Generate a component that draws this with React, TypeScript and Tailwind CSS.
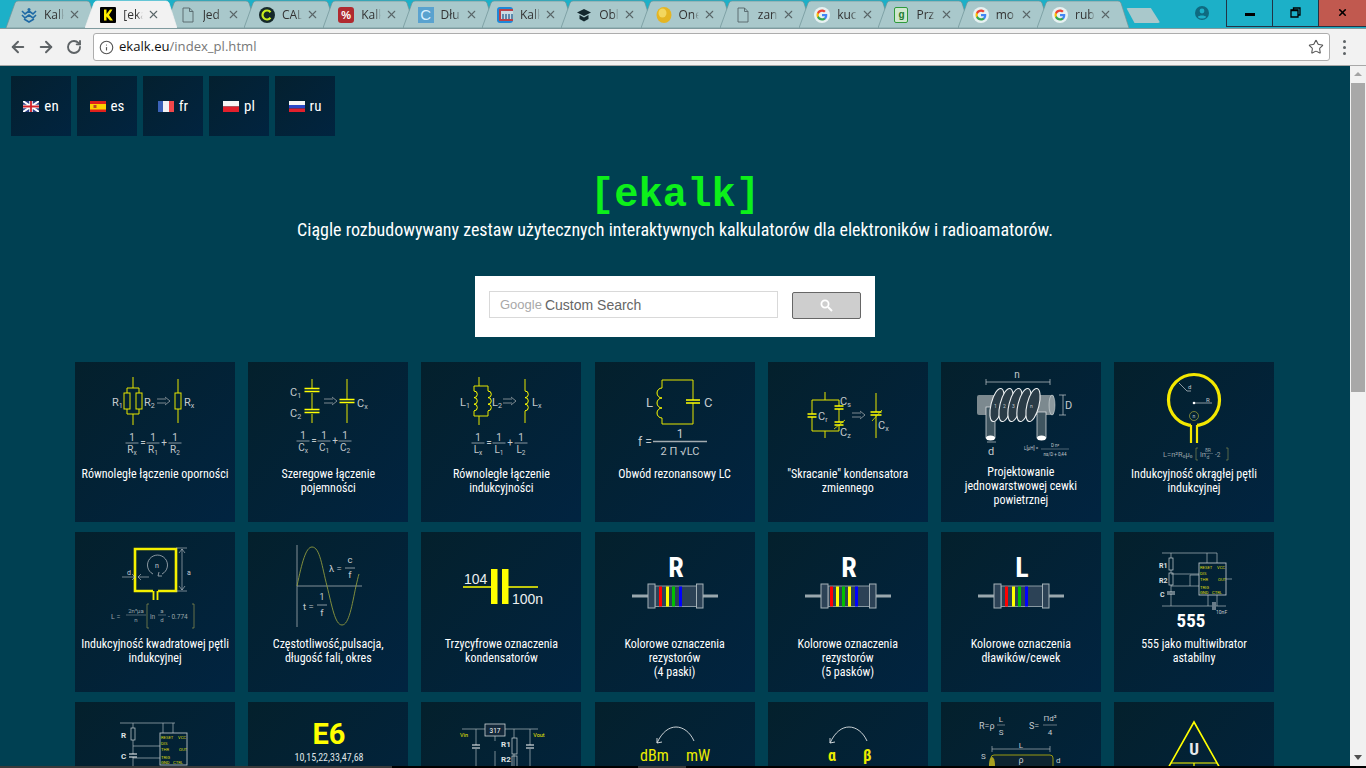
import type { ReactNode } from "react";
import { ArrowLeft, ArrowRight, Info, RotateCw, Star, X } from "lucide-react";

const YEL = "#e6e600";
const GRY = "#c4cace";
const COND = "Roboto Condensed, Liberation Sans Narrow, Roboto";

function T({ x, y, s = 10, c = GRY, a = "start", b = false, f = "Roboto", children }: { x: number; y: number; s?: number; c?: string; a?: "start" | "middle" | "end"; b?: boolean; f?: string; children: ReactNode }) {
  return (
    <text x={x} y={y} fontSize={s} fill={c} textAnchor={a} fontWeight={b ? 700 : 400} fontFamily={f}>
      {children}
    </text>
  );
}

// label with subscript
function Sub({ x, y, l, i, s = 11, c = GRY }: { x: number; y: number; l: string; i: string; s?: number; c?: string }) {
  return (
    <text x={x} y={y} fontSize={s} fill={c} fontFamily="Roboto">
      {l}
      <tspan fontSize={s * 0.65} dy={2}>{i}</tspan>
    </text>
  );
}

function Frac({ x, y, w, l, i }: { x: number; y: number; w: number; l: string; i: string }) {
  return (
    <g>
      <T x={x} y={y - 2} a="middle" s={10}>1</T>
      <line x1={x - w / 2} x2={x + w / 2} y1={y} y2={y} stroke={GRY} strokeWidth={0.7} />
      <text x={x} y={y + 10} fontSize={10} fill={GRY} textAnchor="middle" fontFamily="Roboto">
        {l}
        <tspan fontSize={6.5} dy={2}>{i}</tspan>
      </text>
    </g>
  );
}

function Formula({ l, y = 81, xs }: { l: string; y?: number; xs: number[] }) {
  return (
    <g>
      <Frac x={xs[0]} y={y} w={13} l={l} i="x" />
      <T x={xs[1]} y={y + 3} a="middle" s={10}>=</T>
      <Frac x={xs[2]} y={y} w={13} l={l} i="1" />
      <T x={xs[3]} y={y + 3} a="middle" s={10}>+</T>
      <Frac x={xs[4]} y={y} w={13} l={l} i="2" />
    </g>
  );
}

function Arrow({ x, y }: { x: number; y: number }) {
  return <path d={`M${x} ${y - 2}h9M${x} ${y + 2}h9M${x + 8} ${y - 4}l5 4-5 4`} stroke="#8b959b" fill="none" strokeWidth={0.9} />;
}

function Coil({ x, y, n, r = 3, dir = 1 }: { x: number; y: number; n: number; r?: number; dir?: number }) {
  let d = `M${x} ${y}`;
  for (let k = 0; k < n; k++) d += `a${r} ${r} 0 0 ${dir} 0 ${r * 2}`;
  return <path d={d} stroke="#ffff00" fill="none" strokeWidth={1} />;
}

function Cap({ x, y, w = 14, gap = 3, sw = 1.6 }: { x: number; y: number; w?: number; gap?: number; sw?: number }) {
  return <path d={`M${x - w / 2} ${y - gap / 2}h${w}M${x - w / 2} ${y + gap / 2}h${w}`} stroke="#ffff00" strokeWidth={sw} />;
}

function Svg({ children }: { children: ReactNode }) {
  return (
    <svg width={160} height={104} viewBox="0 0 160 104" className="block">
      {children}
    </svg>
  );
}

function ParallelR() {
  return (
    <Svg>
      <path d="M58 15v11M52 31v-5h12v5M52 47v5h12v-5M58 52v11M103 17v14M103 47v14" stroke={YEL} fill="none" strokeWidth={1} />
      <rect x={49} y={31} width={6} height={16} stroke={YEL} fill="none" />
      <rect x={61} y={31} width={6} height={16} stroke={YEL} fill="none" />
      <rect x={100} y={31} width={6} height={16} stroke={YEL} fill="none" />
      <Sub x={37} y={44} l="R" i="1" />
      <Sub x={69} y={44} l="R" i="2" />
      <Arrow x={82} y={39} />
      <Sub x={109} y={44} l="R" i="x" />
      <Formula l="R" xs={[57, 68, 78, 89, 100]} />
    </Svg>
  );
}

function SeriesC() {
  return (
    <Svg>
      <path d="M64 17v44M99 17v44" stroke={YEL} strokeWidth={1} />
      <rect x={56} y={26} width={16} height={5} fill="#02213a" />
      <rect x={56} y={47} width={16} height={5} fill="#02213a" />
      <rect x={90} y={37} width={18} height={5} fill="#02213a" />
      <Cap x={64} y={28} w={15} />
      <Cap x={64} y={49} w={15} />
      <Cap x={99} y={39} w={15} />
      <Sub x={42} y={34} l="C" i="1" />
      <Sub x={42} y={55} l="C" i="2" />
      <Arrow x={76} y={39} />
      <Sub x={109} y={45} l="C" i="x" />
      <Formula l="C" y={79} xs={[55, 66, 76, 87, 97]} />
    </Svg>
  );
}

function ParallelL() {
  return (
    <Svg>
      <path d="M58 15v9M53 29v-5h14v5M53 49v5h14v-5M58 54v9M104 17v12M104 49v12" stroke={YEL} fill="none" strokeWidth={1} />
      <Coil x={53} y={29} n={3} r={3.3} dir={1} />
      <Coil x={67} y={29} n={3} r={3.3} dir={1} />
      <Coil x={104} y={29} n={3} r={3.3} dir={1} />
      <Sub x={39} y={44} l="L" i="1" />
      <Sub x={71} y={44} l="L" i="2" />
      <Arrow x={82} y={39} />
      <Sub x={111} y={44} l="L" i="x" />
      <Formula l="L" xs={[57, 68, 78, 89, 100]} />
    </Svg>
  );
}

function ResonantLC() {
  return (
    <Svg>
      <path d="M67 26v-8h31v20M98 41v21H67v-6" stroke={YEL} fill="none" strokeWidth={1} />
      <Coil x={67} y={26} n={3} r={5} dir={0} />
      <Cap x={98} y={39.5} w={14} />
      <T x={51} y={45} s={13}>L</T>
      <T x={109} y={45} s={13}>C</T>
      <T x={43} y={84} s={12}>f =</T>
      <T x={85} y={76} s={12} a="middle">1</T>
      <line x1={58} x2={112} y1={79.5} y2={79.5} stroke="#a2abb0" strokeWidth={1.4} />
      <T x={85} y={93} s={11} a="middle">2 Π √LC</T>
    </Svg>
  );
}

function Shorten() {
  return (
    <Svg>
      <path d="M57 30v8M57 69v7M44 52v-14h27v6M44 55v14h27v-6M71 47v13M108 31v19M108 53v23" stroke={YEL} fill="none" strokeWidth={1} />
      <Cap x={44} y={53.5} w={9} />
      <Cap x={71} y={45.5} w={9} />
      <Cap x={71} y={61.5} w={9} />
      <Cap x={108} y={51.5} w={11} />
      <path d="M66 67l11-9M104 59l10-11" stroke={YEL} strokeWidth={0.8} />
      <Sub x={50} y={58} l="C" i="r" />
      <Sub x={72} y={43} l="C" i="s" />
      <Sub x={72} y={74} l="C" i="z" />
      <Arrow x={84} y={53} />
      <Sub x={110} y={67} l="C" i="x" />
    </Svg>
  );
}

function AirCoil() {
  return (
    <Svg>
      <path d="M45 20h64M45 17v6M109 17v6M118 33h7M118 53h7M122 33v20M46 80h9" stroke={GRY} strokeWidth={0.7} fill="none" />
      <T x={76} y={16} a="middle" s={10}>n</T>
      <T x={124} y={47} a="start" s={11}>D</T>
      <T x={50} y={93} a="middle" s={11}>d</T>
      <rect x={36} y={33} width={77} height={20} rx={2} fill="#7c898f" />
      <ellipse cx={111} cy={43} rx={3} ry={10} fill="#8d999e" stroke="#dfe4e6" strokeWidth={0.5} />
      <rect x={45} y={45} width={9} height={31} fill="#3f5560" stroke="#e8ecee" strokeWidth={0.7} />
      <rect x={96} y={50} width={9} height={26} fill="#3f5560" stroke="#e8ecee" strokeWidth={0.7} />
      <ellipse cx={49.5} cy={76} rx={4.5} ry={2.5} fill="#fff" />
      <ellipse cx={100.5} cy={76} rx={4.5} ry={2.5} fill="#fff" />
      {[56, 65, 74, 83, 92].map((x) => (
        <ellipse key={x} cx={x} cy={43} rx={6} ry={17} transform={`rotate(14 ${x} 43)`} fill="#2a3c47" stroke="#eef1f2" strokeWidth={1.1} />
      ))}
      <T x={53} y={46} s={5}>1</T>
      <T x={62} y={46} s={5}>2</T>
      <T x={71} y={46} s={5}>3</T>
      <T x={89} y={46} s={5}>n</T>
      <T x={83} y={88} s={4.5}>L[µH] =</T>
      <T x={114} y={85} s={4.5} a="middle">D n²</T>
      <line x1={100} x2={128} y1={87} y2={87} stroke={GRY} strokeWidth={0.4} />
      <T x={114} y={94} s={4.5} a="middle">ns/D + 0,44</T>
    </Svg>
  );
}

function RoundLoop() {
  return (
    <Svg>
      <circle cx={80} cy={38} r={25.5} stroke="#f4e800" strokeWidth={3.2} fill="none" />
      <rect x={77} y={60} width={6} height={6} fill="#04223a" />
      <path d="M77 63v18M83 63v18" stroke="#f4e800" strokeWidth={2.2} />
      <path d="M80 41h18M65 21l8 8h4" stroke="#c9cfd2" strokeWidth={0.7} fill="none" />
      <circle cx={80} cy={41} r={1.3} fill="#fff" />
      <T x={92} y={40} s={6}>R</T>
      <T x={74} y={27} s={6}>d</T>
      <circle cx={80} cy={54} r={4.5} stroke="#a6a83a" fill="none" strokeWidth={0.7} />
      <T x={80} y={56} s={5} a="middle">n</T>
      <T x={49} y={95} s={7.5} c="#98a3a8">L=n²R₀μ₀</T>
      <T x={86} y={95} s={7.5} c="#98a3a8">ln</T>
      <path d="M84 86h-2v12h2M112 86h2v12h-2" stroke="#8f9450" fill="none" strokeWidth={0.6} />
      <T x={94} y={90} s={5} a="middle" c="#98a3a8">8R</T>
      <line x1={90} x2={99} y1={91.5} y2={91.5} stroke="#98a3a8" strokeWidth={0.4} />
      <T x={94} y={97} s={5} a="middle" c="#98a3a8">d</T>
      <T x={101} y={95} s={6.5} c="#98a3a8">-2</T>
    </Svg>
  );
}

function SquareLoop() {
  return (
    <Svg>
      <path d="M78 59H60V17h41v42H83" stroke="#f4f000" strokeWidth={2.6} fill="none" />
      <path d="M78.5 59v9M82.5 59v9" stroke="#f4f000" strokeWidth={1.8} />
      <path d="M101 16h11M101 59h11M107 17v41M104 21l3-4 3 4M104 54l3 4 3-4M47 45h13M57 42l3 3-3 3M74 45h-11M66 42l-3 3 3 3" stroke={GRY} strokeWidth={0.6} fill="none" />
      <path d="M87 42A10 10 0 1 0 78 42M84 40l-1 4 4 0" stroke={GRY} strokeWidth={0.7} fill="none" />
      <T x={82} y={36} a="middle" s={7}>n</T>
      <T x={112} y={43} s={7}>a</T>
      <T x={52} y={43} s={7}>d</T>
      <T x={36} y={87} s={7} c="#9aa5a9">L =</T>
      <T x={61} y={81} s={6} a="middle" c="#9aa5a9">2n²μa</T>
      <line x1={51} x2={71} y1={83} y2={83} stroke="#9aa5a9" strokeWidth={0.5} />
      <T x={61} y={90} s={6} a="middle" c="#9aa5a9">n</T>
      <path d="M74 72h-2v24h2M117 72h2v24h-2" stroke="#8f9450" strokeWidth={0.7} fill="none" />
      <T x={75} y={87} s={6.5} c="#9aa5a9">ln</T>
      <T x={87} y={81} s={6} a="middle" c="#9aa5a9">a</T>
      <line x1={83} x2={91} y1={83} y2={83} stroke="#9aa5a9" strokeWidth={0.5} />
      <T x={87} y={90} s={6} a="middle" c="#9aa5a9">d</T>
      <T x={93} y={87} s={6.5} c="#9aa5a9">- 0.774</T>
    </Svg>
  );
}

function Wave() {
  return (
    <Svg>
      <path d="M49 13v82M49 54h65" stroke="#a4adb1" strokeWidth={0.8} />
      <path d="M49 54C54 30 58 15 64 15c8 0 10 20 15 39 5 20 8 39 15 39 7 0 10-20 14-39 1-4 2-9 3-12" stroke="#8f9a3e" strokeWidth={0.9} fill="none" />
      <T x={81} y={40} s={9.5}>λ =</T>
      <T x={102} y={31} s={9.5} a="middle">c</T>
      <line x1={97} x2={107} y1={36} y2={36} stroke={GRY} strokeWidth={0.7} />
      <T x={102} y={46} s={9.5} a="middle">f</T>
      <T x={55} y={78} s={9.5}>t =</T>
      <T x={74} y={68} s={9.5} a="middle">1</T>
      <line x1={69} x2={79} y1={73} y2={73} stroke={GRY} strokeWidth={0.7} />
      <T x={74} y={84} s={9.5} a="middle">f</T>
    </Svg>
  );
}

function ThreeDigit() {
  return (
    <Svg>
      <path d="M42 55h28M87 55h30" stroke="#ffff00" strokeWidth={1.6} />
      <rect x={70} y={37} width={6.5} height={35} fill="#ffff00" />
      <rect x={81} y={37} width={6.5} height={35} fill="#ffff00" />
      <T x={43} y={52} s={14} c="#eceff0" f="Liberation Sans">104</T>
      <T x={91} y={72} s={14} c="#eceff0" f="Liberation Sans">100n</T>
    </Svg>
  );
}

function Resistor({ letter, bands }: { letter: string; bands: [number, string][] }) {
  return (
    <Svg>
      <T x={81} y={45} s={28} c="#fff" a="middle" b f={COND}>{letter}</T>
      <path d="M37 64h16M107 64h16" stroke="#9aa8ae" strokeWidth={3} />
      <rect x={60} y={54} width={42} height={20.5} fill="#2c4256" stroke="#a5b2b8" strokeWidth={0.8} />
      <rect x={53} y={52} width={7} height={24} fill="#2c4256" stroke="#a5b2b8" />
      <rect x={101.5} y={52} width={6.5} height={24} fill="#2c4256" stroke="#a5b2b8" />
      {bands.map(([x, c]) => (
        <rect key={x} x={x} y={54.5} width={3} height={20} fill={c} />
      ))}
    </Svg>
  );
}

function Ic() {
  return (
    <g>
      <rect x={85} y={31} width={27} height={32} fill="none" stroke="#b9c2c6" strokeWidth={0.9} />
      <g fontSize={4.2} fill="#dcdc10" fontFamily="Roboto">
        <text x={86} y={37}>RESET</text>
        <text x={103} y={37}>VCC</text>
        <text x={86} y={43}>DIS</text>
        <text x={86} y={49}>THR</text>
        <text x={104} y={49}>OUT</text>
        <text x={86} y={57}>TRIG</text>
        <text x={86} y={62}>GND</text>
        <text x={98} y={62}>CTRL</text>
      </g>
    </g>
  );
}

function Astable() {
  return (
    <Svg>
      <path d="M48 21h55M93 21v10M103 21v10M57 21v5M57 38v3M57 53v7M57 62v12M48 74h50M102 74h10M57 42h28M57 54h28M76 54V43M76 43h9M94 63v11M103 63v11M112 47h6" stroke="#aeb8bd" strokeWidth={0.7} fill="none" />
      <rect x={55} y={26} width={4} height={12} fill="none" stroke="#c9d0d3" strokeWidth={0.7} />
      <rect x={55} y={41} width={4} height={12} fill="none" stroke="#c9d0d3" strokeWidth={0.7} />
      <path d="M53 60h8M53 62h8M99 70v8M101 70v8" stroke="#e8ecee" strokeWidth={0.9} />
      <Ic />
      <T x={45} y={36} s={7} c="#dfe3e5" b>R1</T>
      <T x={45} y={51} s={7} c="#dfe3e5" b>R2</T>
      <T x={46} y={65} s={7} c="#dfe3e5" b>C</T>
      <T x={102} y={82} s={5}>10nF</T>
      <T x={77} y={95} s={19} c="#fff" a="middle" b f={COND}>555</T>
    </Svg>
  );
}

function Astable2() {
  return (
    <Svg>
      <path d="M45 21h55M88 21v10M98 21v10M58 21v5M58 38v14M58 55v12M58 44h27M58 56h27" stroke="#aeb8bd" strokeWidth={0.7} fill="none" />
      <rect x={56} y={26} width={4} height={12} fill="none" stroke="#c9d0d3" strokeWidth={0.7} />
      <path d="M54 52h8M54 55h8" stroke="#fff" strokeWidth={1} />
      <Ic />
      <T x={46} y={36} s={8} c="#dfe3e5" b>R</T>
      <T x={46} y={57} s={8} c="#dfe3e5" b>C</T>
    </Svg>
  );
}

function E6() {
  return (
    <Svg>
      <T x={81} y={42} s={29} c="#ffff00" a="middle" b>E6</T>
      <T x={81} y={59} s={10} c="#dfe3e5" a="middle" f={COND}>10,15,22,33,47,68</T>
    </Svg>
  );
}

function Reg317() {
  return (
    <Svg>
      <path d="M41 27h76M55 27v16M55 47v20M109 27v16M109 47v20M74 34v5M74 49v18M93 27v9M93 52v15" stroke="#aeb8bd" strokeWidth={0.7} fill="none" />
      <rect x={64} y={22} width={20} height={12} fill="#13283a" stroke="#cdd4d7" strokeWidth={0.8} />
      <T x={74} y={31} s={6.5} c="#fff" a="middle">317</T>
      <rect x={91} y={36} width={5} height={16} fill="none" stroke="#cdd4d7" strokeWidth={0.7} />
      <rect x={91} y={54} width={5} height={12} fill="none" stroke="#cdd4d7" strokeWidth={0.7} />
      <path d="M51 43h8M51 46h8M105 43h8M105 46h8" stroke="#fff" strokeWidth={1} />
      <T x={43} y={35} s={5.5} c="#ecec00" a="middle">Vin</T>
      <T x={118} y={35} s={5.5} c="#ecec00" a="middle">Vout</T>
      <T x={80} y={45} s={8} c="#dfe3e5" b>R1</T>
      <T x={80} y={60} s={8} c="#dfe3e5" b>R2</T>
    </Svg>
  );
}

function Convert({ a, b, f = false }: { a: string; b: string; f?: boolean }) {
  return (
    <Svg>
      <path d="M62 41c5-11 12-16 19-16s14 5 18 14M62 41v-5M62 41l5-1" stroke="#dfe3e5" strokeWidth={0.9} fill="none" />
      <T x={f ? 60 : 45} y={59} s={16} c="#ecec00" b={f} f={COND}>{a}</T>
      <T x={f ? 95 : 91} y={59} s={16} c="#ecec00" b={f} f={COND}>{b}</T>
    </Svg>
  );
}

function Resistivity() {
  return (
    <Svg>
      <T x={38} y={27} s={9}>R=ρ</T>
      <T x={60} y={20} s={8} a="middle">L</T>
      <T x={60} y={33} s={8} a="middle">S</T>
      <path d="M56 23h8" stroke={GRY} strokeWidth={0.5} />
      <T x={88} y={27} s={9}>S=</T>
      <T x={109} y={19} s={8} a="middle">Πd²</T>
      <T x={109} y={33} s={8} a="middle">4</T>
      <path d="M102 23h14" stroke={GRY} strokeWidth={0.5} />
      <path d="M51 47h58M51 44v6M109 44v6" stroke={GRY} strokeWidth={0.6} />
      <T x={80} y={46} s={8} a="middle">L</T>
      <T x={40} y={57} s={8}>S</T>
      <T x={115} y={61} s={8}>d</T>
      <rect x={50} y={53} width={62} height={20} rx={3} fill="#0e2430" stroke="#9a9a10" strokeWidth={1} />
      <ellipse cx={51} cy={63} rx={3} ry={8} fill="#a8a020" />
      <T x={80} y={61} s={9} a="middle">ρ</T>
    </Svg>
  );
}

function Triangle() {
  return (
    <Svg>
      <path d="M80 20L53 68h54z" stroke="#ffff00" strokeWidth={1.6} fill="none" />
      <path d="M57 61h46M80 61v10" stroke="#ffff00" strokeWidth={1.2} />
      <T x={80} y={53} s={17} c="#e6eaec" a="middle" b f={COND}>U</T>
    </Svg>
  );
}

const tiles: { icon: ReactNode; label: string[]; tall?: boolean }[] = [
  { icon: <ParallelR />, label: ["Równoległe łączenie oporności"] },
  { icon: <SeriesC />, label: ["Szeregowe łączenie", "pojemności"] },
  { icon: <ParallelL />, label: ["Równoległe łączenie", "indukcyjności"] },
  { icon: <ResonantLC />, label: ["Obwód rezonansowy LC"] },
  { icon: <Shorten />, label: ['"Skracanie" kondensatora', "zmiennego"] },
  { icon: <AirCoil />, label: ["Projektowanie", "jednowarstwowej cewki", "powietrznej"], tall: true },
  { icon: <RoundLoop />, label: ["Indukcyjność okrągłej pętli", "indukcyjnej"] },
  { icon: <SquareLoop />, label: ["Indukcyjność kwadratowej pętli", "indukcyjnej"] },
  { icon: <Wave />, label: ["Częstotliwość,pulsacja,", "długość fali, okres"] },
  { icon: <ThreeDigit />, label: ["Trzycyfrowe oznaczenia", "kondensatorów"] },
  { icon: <Resistor letter="R" bands={[[64, "#ff0000"], [71, "#ffff00"], [77, "#00c000"], [84, "#0000ff"]]} />, label: ["Kolorowe oznaczenia", "rezystorów", "(4 paski)"] },
  { icon: <Resistor letter="R" bands={[[62, "#ff0000"], [68, "#ffff00"], [74, "#00c000"], [80, "#ffff00"], [87, "#0000ff"]]} />, label: ["Kolorowe oznaczenia", "rezystorów", "(5 pasków)"] },
  { icon: <Resistor letter="L" bands={[[64, "#ff0000"], [71, "#ffff00"], [77, "#00c000"], [84, "#0000ff"]]} />, label: ["Kolorowe oznaczenia", "dławików/cewek"] },
  { icon: <Astable />, label: ["555 jako multiwibrator", "astabilny"] },
  { icon: <Astable2 />, label: [] },
  { icon: <E6 />, label: [] },
  { icon: <Reg317 />, label: [] },
  { icon: <Convert a="dBm" b="mW" />, label: [] },
  { icon: <Convert a="α" b="β" f />, label: [] },
  { icon: <Resistivity />, label: [] },
  { icon: <Triangle />, label: [] },
];

function Doc() {
  return (
    <svg width={16} height={16} viewBox="0 0 16 16">
      <path d="M3 1h6.5L13 4.5V15H3zM9.5 1v3.5H13" fill="none" stroke="#55656a" strokeWidth={0.9} />
    </svg>
  );
}

function GoogleG() {
  return (
    <svg width={16} height={16} viewBox="0 0 24 24">
      <circle cx={12} cy={12} r={12} fill="#e8f2f2" />
      <g transform="translate(3 3) scale(.75)">
        <path fill="#4285F4" d="M22.56 12.25c0-.78-.07-1.53-.2-2.25H12v4.26h5.92c-.26 1.37-1.04 2.53-2.21 3.31v2.77h3.57c2.08-1.92 3.28-4.74 3.28-8.09z" />
        <path fill="#34A853" d="M12 23c2.97 0 5.46-.98 7.28-2.66l-3.57-2.77c-.98.66-2.23 1.06-3.71 1.06-2.86 0-5.29-1.93-6.16-4.53H2.18v2.84C3.99 20.53 7.7 23 12 23z" />
        <path fill="#FBBC05" d="M5.84 14.09c-.22-.66-.35-1.36-.35-2.09s.13-1.43.35-2.09V7.07H2.18C1.43 8.55 1 10.22 1 12s.43 3.45 1.18 4.93l2.85-2.22.81-.62z" />
        <path fill="#EA4335" d="M12 5.38c1.62 0 3.06.56 4.21 1.64l3.15-3.15C17.45 2.09 14.97 1 12 1 7.7 1 3.99 3.47 2.18 7.07l3.66 2.84c.87-2.6 3.3-4.53 6.16-4.53z" />
      </g>
    </svg>
  );
}

const favicons: Record<string, ReactNode> = {
  net: (
    <svg width={16} height={16} viewBox="0 0 16 16">
      <path d="M1 4l3 3 4-3 4 3 3-3M1 8l3 3 4-3 4 3 3-3M3 12l5 3 5-3" stroke="#1f6aa5" strokeWidth={1.6} fill="none" />
      <circle cx={8} cy={2.5} r={1.5} fill="#1f6aa5" />
    </svg>
  ),
  k: (
    <svg width={16} height={16} viewBox="0 0 16 16">
      <rect width={16} height={16} rx={1} fill="#000" />
      <path d="M4 2.5v11h2.5v-4l3.5 4h3L9 8l3.5-5.5H10L6.5 7V2.5z" fill="#ffee00" />
    </svg>
  ),
  doc: <Doc />,
  c: (
    <svg width={16} height={16} viewBox="0 0 16 16">
      <circle cx={8} cy={8} r={8} fill="#15282a" />
      <path d="M11.5 5.2a4.5 4.5 0 1 0 0 5.6" stroke="#c9ee1e" strokeWidth={2.2} fill="none" />
    </svg>
  ),
  pct: (
    <div className="w-4 h-4 rounded-[3px] bg-[#b02a30] text-white text-[11px] font-bold leading-4 text-center font-['Liberation_Sans',sans-serif]">%</div>
  ),
  dc: (
    <div className="w-4 h-4 bg-[#5aa2cf] text-[#d8f0ff] text-[15px] leading-4 text-center font-['Liberation_Sans',sans-serif]">C</div>
  ),
  calc: (
    <svg width={16} height={16} viewBox="0 0 16 16">
      <rect width={16} height={16} rx={3} fill="#1e88d8" />
      <rect x={2} y={2} width={14} height={12} fill="#b8434a" />
      <rect x={4} y={4} width={12} height={8} fill="#c9dbe3" />
      <path d="M6 7v5M9 7v5M12 7v5M15 7v5" stroke="#3a6f9a" strokeWidth={1.5} />
    </svg>
  ),
  cap: (
    <svg width={16} height={16} viewBox="0 0 16 16">
      <path d="M8 2l7 3.5L8 9 1 5.5z" fill="#14282e" />
      <path d="M3.5 8v4L8 14.5l4.5-2.5V8L8 10.5z" fill="#14282e" />
    </svg>
  ),
  coin: (
    <svg width={16} height={16} viewBox="0 0 16 16">
      <ellipse cx={8} cy={8} rx={7.5} ry={8} fill="#e5b522" />
      <ellipse cx={6.5} cy={6} rx={4} ry={4.5} fill="#f3d75e" />
    </svg>
  ),
  g: <GoogleG />,
  jar: (
    <div className="w-[14px] h-4 mx-px bg-[#cfe7cf] border border-[#2f9a3c] rounded-[2px] text-[#227a2e] text-[10px] font-bold leading-[14px] text-center font-['Liberation_Sans',sans-serif]">g</div>
  ),
};

const tabData: [string, string][] = [
  ["net", "Kalk"],
  ["k", "[eka"],
  ["doc", "Jed"],
  ["c", "CAL"],
  ["pct", "Kalk"],
  ["dc", "Dłu"],
  ["calc", "Kalk"],
  ["cap", "Obl"],
  ["coin", "One"],
  ["doc", "zan"],
  ["g", "kuc"],
  ["jar", "Prz"],
  ["g", "mo"],
  ["g", "rub"],
];

function Tab({ kind, title, active }: { kind: string; title: string; active: boolean }) {
  return (
    <div className={active ? "relative z-10 w-[92px] h-[28px] -mr-[12.7px] shrink-0" : "relative w-[92px] h-[28px] -mr-[12.7px] shrink-0"}>
      <svg width={92} height={28} viewBox="0 0 92 28" className="absolute inset-0">
        <path d="M0 28L9 3Q10 1 12 1H81Q83 1 84 3L92 28Z" fill={active ? "#f2f2f2" : "#a9c8cb"} stroke={active ? "#f2f2f2" : "#6f9296"} strokeWidth={0.7} />
      </svg>
      <div className="relative flex items-center h-full pl-[15px] pt-px">
        <span className="w-4 h-4 shrink-0">{favicons[kind]}</span>
        <span className="ml-[7px] w-[20px] whitespace-nowrap text-[12px] text-[#333] font-['Open_Sans',sans-serif] [mask-image:linear-gradient(to_right,black_70%,transparent)]">{title}</span>
        <X size={13} strokeWidth={2} className="ml-[4px] text-[#5a6668]" />
      </div>
    </div>
  );
}

function Flag({ code }: { code: string }) {
  if (code === "en")
    return (
      <svg width={16} height={11} viewBox="0 0 16 11">
        <rect width={16} height={11} fill="#2b3f86" />
        <path d="M0 0l16 11M16 0L0 11" stroke="#fff" strokeWidth={2} />
        <path d="M8 0v11M0 5.5h16" stroke="#fff" strokeWidth={3.5} />
        <path d="M8 0v11M0 5.5h16" stroke="#d0222a" strokeWidth={1.8} />
      </svg>
    );
  if (code === "es")
    return (
      <svg width={16} height={11} viewBox="0 0 16 11">
        <rect width={16} height={11} fill="#e0201c" />
        <rect y={3} width={16} height={5.5} fill="#fbd000" />
        <rect x={3.5} y={4} width={3} height={3} fill="#b8442a" />
      </svg>
    );
  if (code === "fr")
    return (
      <svg width={16} height={11} viewBox="0 0 16 11">
        <rect width={16} height={11} fill="#f4f4f4" />
        <rect width={5} height={11} fill="#3b62b8" />
        <rect x={11} width={5} height={11} fill="#f0474a" />
      </svg>
    );
  if (code === "pl")
    return (
      <svg width={16} height={11} viewBox="0 0 16 11">
        <rect width={16} height={5.5} fill="#f6f6f6" />
        <rect y={5.5} width={16} height={5.5} fill="#e2202c" />
      </svg>
    );
  return (
    <svg width={16} height={11} viewBox="0 0 16 11">
      <rect width={16} height={4} fill="#f6f6f6" />
      <rect y={4} width={16} height={3.5} fill="#2a48c8" />
      <rect y={7.5} width={16} height={3.5} fill="#e2202c" />
    </svg>
  );
}

export default function App() {
  return (
    <div className="w-[1366px] h-[768px] overflow-hidden flex flex-col font-['Roboto_Condensed','Liberation_Sans_Narrow',Roboto,sans-serif]">
      {/* tab strip */}
      <div className="h-[28px] shrink-0 bg-[#1cb0c8] flex relative">
        <div className="flex pl-[6px] h-full">
          {tabData.map(([kind, title], i) => (
            <Tab key={i} kind={kind} title={title} active={i === 1} />
          ))}
        </div>
        <div className="ml-[10px] mt-[8px] w-[34px] h-[15px] bg-[#a9c8cb] rounded-[2px] [clip-path:polygon(0_0,72%_0,100%_100%,24%_100%)]" />
        <div className="flex-1" />
        <svg width={16} height={16} viewBox="0 0 16 16" className="mt-[5px] mr-[16px]">
          <circle cx={8} cy={8} r={7} fill="#0f6a80" />
          <circle cx={8} cy={6} r={2.4} fill="#1cb0c8" />
          <path d="M3.8 12c1-2 7.4-2 8.4 0-2 2-6.4 2-8.4 0z" fill="#1cb0c8" />
        </svg>
        <div className="flex h-[27px] shrink-0 border-b border-[#234] border-l">
          <div className="w-[46px] flex items-center justify-center border-r border-[#234]">
            <div className="w-[10px] h-[3px] bg-black mt-[3px]" />
          </div>
          <div className="w-[46px] flex items-center justify-center border-r border-[#234]">
            <svg width={11} height={11} viewBox="0 0 11 11" className="-mt-[1px]">
              <path d="M1 3h7v7H1zM3.5 3V1H10v7H8" stroke="#000" fill="none" strokeWidth={1.3} />
              <path d="M1 3.5h7" stroke="#000" strokeWidth={1.5} />
            </svg>
          </div>
          <div className="w-[47px] bg-[#c1594f] flex items-center justify-center">
            <X size={11} strokeWidth={3.5} className="text-black -mt-[1px]" />
          </div>
        </div>
      </div>

      {/* toolbar */}
      <div className="h-[38px] shrink-0 bg-[#f2f2f2] border-t border-[#7f9a9e] border-b-[1px] border-b-[#a8a8a8] flex items-center">
        <ArrowLeft size={18} strokeWidth={2.6} className="ml-[9px] text-[#5e6366]" />
        <ArrowRight size={18} strokeWidth={2.6} className="ml-[10px] text-[#5e6366]" />
        <RotateCw size={16} strokeWidth={2.8} className="ml-[11px] text-[#5e6366]" />
        <div className="ml-[11px] w-[1237px] h-[28px] bg-white border border-[#adadad] rounded-[3px] flex items-center font-['Open_Sans',sans-serif] text-[13.1px]">
          <Info size={15} strokeWidth={1.8} className="ml-[5px] text-[#555]" />
          <span className="ml-[5px] text-[#111]">ekalk.eu</span>
          <span className="text-[#777]">/index_pl.html</span>
          <div className="flex-1" />
          <Star size={16} strokeWidth={1.6} className="mr-[5px] text-[#555]" />
        </div>
        <div className="ml-[13px] flex flex-col gap-[3px]">
          <div className="w-[3px] h-[3px] bg-[#5e6366] rounded-full" />
          <div className="w-[3px] h-[3px] bg-[#5e6366] rounded-full" />
          <div className="w-[3px] h-[3px] bg-[#5e6366] rounded-full" />
        </div>
      </div>

      {/* page */}
      <div className="flex-1 min-h-0 flex">
        <main className="w-[1350px] bg-[#004052] overflow-hidden">
          <nav className="flex gap-[6px] pt-[10px] pl-[11px]">
            {["en", "es", "fr", "pl", "ru"].map((c) => (
              <a key={c} className="w-[60px] h-[60px] flex items-center justify-center gap-[5px] bg-linear-to-br from-[#04202f] to-[#012440] text-white text-[15px] font-normal">
                <Flag code={c} />
                {c}
              </a>
            ))}
          </nav>
          <h1 className="mt-[39px] h-[40px] text-center text-[40.5px] leading-[40px] font-bold text-[#0df01a] font-['Liberation_Mono',monospace]">[ekalk]</h1>
          <p className="mt-[3px] h-[24px] text-center text-white text-[18px] leading-[24px] font-normal">
            Ciągle rozbudowywany zestaw użytecznych interaktywnych kalkulatorów dla elektroników i radioamatorów.
          </p>
          <div className="mt-[34px] mx-auto w-[400px] h-[61px] bg-white flex items-start pl-[14px] pt-[15px] font-['Liberation_Sans',sans-serif] text-[14px]">
            <div className="w-[289px] h-[27px] border border-[#d9d9d9] flex items-center pl-[10px] pt-[1px]">
              <span className="text-[#a8a8a8] text-[13px]">Google</span>
              <span className="ml-[3px] text-[#666]">Custom Search</span>
            </div>
            <div className="ml-[14px] mt-px w-[69px] h-[27px] bg-[#cecece] border border-[#666] rounded-[2px] flex items-center justify-center">
              <svg width={13} height={13} viewBox="0 0 13 13">
                <circle cx={5} cy={5} r={3.6} stroke="#fff" strokeWidth={1.8} fill="none" />
                <path d="M8 8l4 4" stroke="#fff" strokeWidth={2} />
              </svg>
            </div>
          </div>
          <div className="mt-[25px] ml-[75.1px] w-[1199px] grid grid-cols-[repeat(7,160px)] justify-between gap-y-[10px]">
            {tiles.map((t, i) => (
              <div key={i} className="h-[160px] bg-linear-to-br from-[#04202c] to-[#012441]">
                {t.icon}
                <div className={t.tall ? "-mt-[1px] text-center text-white text-[12px] leading-[14px] font-normal" : "mt-px text-center text-white text-[12px] leading-[14px] font-normal"}>
                  {t.label.map((l) => (
                    <div key={l}>{l}</div>
                  ))}
                </div>
              </div>
            ))}
          </div>
        </main>
        <aside className="w-[16px] bg-[#f1f1f1] flex flex-col items-center relative">
          <div className="mt-[6px] w-0 h-0 border-x-[4px] border-x-transparent border-b-[4px] border-b-[#a3a3a3]" />
          <div className="mt-[7px] w-[14px] h-[309px] bg-[#a8a8a8]" />
          <div className="flex-1" />
          <div className="mb-[6px] w-0 h-0 border-x-[4px] border-x-transparent border-t-[5px] border-t-[#505050]" />
        </aside>
      </div>

      {/* clipped taskbar edge */}
      <div className="h-[2px] shrink-0 bg-black flex">
        <div className="ml-0 w-[392px] bg-[#3a3a3a]" />
        <div className="ml-[246px] w-[48px] bg-[#3a3a3a]" />
      </div>
    </div>
  );
}
